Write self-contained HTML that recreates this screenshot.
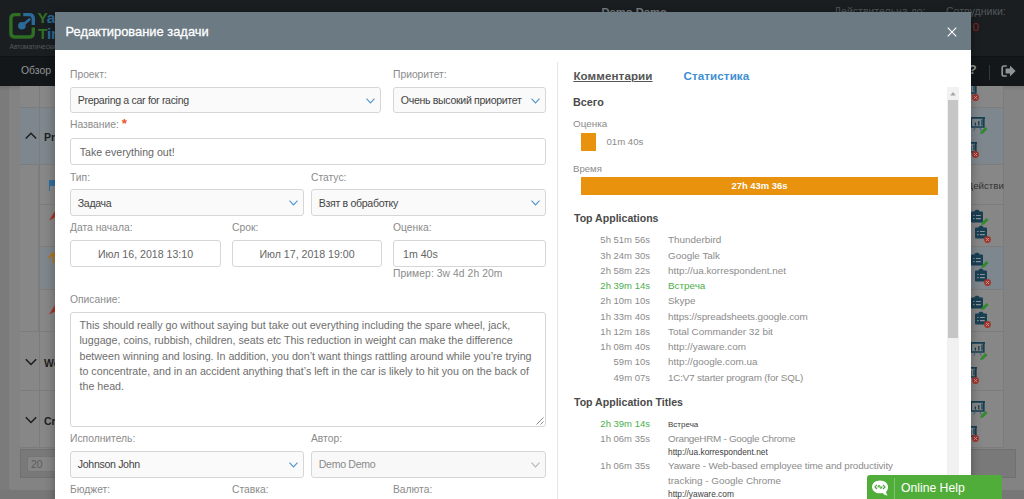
<!DOCTYPE html>
<html lang="ru">
<head>
<meta charset="utf-8">
<title>Редактирование задачи</title>
<style>
*{box-sizing:border-box;margin:0;padding:0}
html,body{width:1024px;height:499px;overflow:hidden;background:#7c7c7c;font-family:"Liberation Sans",sans-serif;}
#page,#page div,#page span,#page svg{position:absolute}
#page{left:0;top:0;width:1024px;height:499px;overflow:hidden;background:#7b7b7b}
.t{white-space:nowrap;line-height:14px}
/* ---------- dimmed background page ---------- */
#topbar{left:0;top:0;width:1024px;height:56px;background:#1a1e21}
#navbar{left:0;top:55.5px;width:1024px;height:30px;background:#13171a;border-top:1px solid #0f1215}
#navbar .ob{left:21px;top:7.8px;font-size:10.4px;color:#939596}
.bgc{background:#828282}
.bgb{background:#77828a}
#cont{left:9px;top:85px;width:1020px;height:405px;background:#838383;border-radius:0 0 0 4px}
#foot{left:0;top:490px;width:1024px;height:9px;background:#777}
.cell{background:#878787;border-right:1px solid #7c7c7c;border-bottom:1px solid #7c7c7c}
.bl{background:#7e878d}
.vl{width:1px;background:#7c7c7c}
.gb{font-size:10.5px;font-weight:bold;color:#1e1e1e}
.pg{background:#797979;border:1px solid #707070}
.pgi{background:#868686;border:1px solid #767676;border-radius:2px}
.lg{font-size:15.5px;font-weight:bold;letter-spacing:-.2px}
/* ---------- modal ---------- */
#modal{left:55px;top:12px;width:916px;height:500px;background:#fff;box-shadow:0 1px 10px rgba(0,0,0,.32)}
#mhead{left:0;top:0;width:916px;height:38px;background:#6c7a84}
#mhead .ttl{left:10.5px;top:12.6px;font-size:12.9px;color:#fff;-webkit-text-stroke:.3px #fff}
.lbl{font-size:10.3px;color:#8b8b8b;margin-top:.7px}
.inp{border:1px solid #d6d6d6;border-radius:3px;background:#fff;height:26.4px}
.inp .t{font-size:10.6px;color:#666;top:6px}
.sel{border:1px solid #d6d6d6;border-radius:3px;background:#fafafa;height:26.4px}
.sel .t{left:6.8px;top:5.5px;font-size:10.6px;letter-spacing:-.33px;color:#444}
.sel svg{right:5px;top:10px;width:9px;height:6px}
.dis{background:#f8f8f8}
.dis .t{color:#8a8a8a}
.tx{font-size:10.68px;color:#6e6e6e;white-space:nowrap;line-height:15.25px}
.tab{font-size:11.6px;font-weight:bold;letter-spacing:.1px}
.hb{font-size:10.8px;font-weight:bold;color:#4a4a4a}
.ha{font-size:10.57px;font-weight:bold;color:#4a4a4a;margin-top:.7px}
.rl{font-size:9.9px;color:#8b8b8b}
.tm{left:496px;width:99px;text-align:right;font-size:9.5px;color:#8b8b8b}
.nm{left:613px;font-size:9.9px;color:#8b8b8b}
.sm{left:613px;font-size:8.35px;color:#3d3d3d}
.g{color:#4cae4c}
#oh{left:867px;top:475px;width:135px;height:30px;background:#51ad3a;border-radius:3px 3px 0 0}
#vdiv{left:502px;top:50px;width:1px;height:450px;background:#e6e6e6}
</style>
</head>
<body>
<div id="page">
  <svg style="width:0;height:0;left:0;top:0" viewBox="0 0 1 1"><defs>
    <g id="i-board"><path d="M0 .9 H15 M1.2 .9 V10 H13.8 V.9" fill="none" stroke="#173f52" stroke-width="1.7"/><path d="M5.2 10.5 L3.8 13.6 M9.8 10.5 L11.2 13.6" fill="none" stroke="#3f5f6e" stroke-width="1"/><path d="M5.4 8.6 V5.6 M8.8 8.6 V4.1 M12 8.6 V2.6" stroke="#173f52" stroke-width="1.3" fill="none"/></g>
    <g id="i-clip"><path d="M1 2.5 H3.5 C3.5 .3 8.5 .3 8.5 2.5 H11 Q12 2.5 12 3.5 V12.5 Q12 13.5 11 13.5 H1 Q0 13.5 0 12.5 V3.5 Q0 2.5 1 2.500Z" fill="#193f52"/><path d="M2.2 6.5 H3.6 M5 6.5 H9.8 M2.2 9.7 H3.6 M5 9.7 H9.8" stroke="#8b9499" stroke-width="1.2" fill="none"/></g>
    <g id="i-pen"><path d="M0 7 L1 4.5 L5.5 0 L7.5 2 L3 6.500Z" fill="#2f8a2c"/></g>
    <g id="i-x"><circle cx="3.5" cy="3.5" r="3.4" fill="#a3352d"/><path d="M2.1 2.1 L4.9 4.9 M4.9 2.1 L2.1 4.9" stroke="#b9a09d" stroke-width="1" fill="none"/></g>
    <g id="i-up"><path d="M.8 6.5 L6 1.3 L11.2 6.5" fill="none" stroke="#1c1c1c" stroke-width="1.5"/></g>
    <g id="i-dn"><path d="M.8 1.3 L6 6.5 L11.2 1.3" fill="none" stroke="#1c1c1c" stroke-width="1.5"/></g>
  </defs></svg>
  
  <!-- dimmed page behind the dialog -->
  <div id="cont"></div>
  <div id="foot"></div>
  <div style="left:0;top:85px;width:1024px;height:6px;background:linear-gradient(rgba(0,0,0,.12),rgba(0,0,0,0))"></div>
  <!-- left strip of table -->
  <div class="cell" style="left:20px;top:85px;width:40px;height:23px"></div>
  <div class="cell bl" style="left:20px;top:108px;width:40px;height:57px"></div>
  <div class="cell" style="left:20px;top:165px;width:19px;height:167px"></div>
  <div class="cell" style="left:39px;top:165px;width:21px;height:40px"></div>
  <div class="cell" style="left:39px;top:205px;width:21px;height:42px"></div>
  <div class="cell bl" style="left:39px;top:247px;width:21px;height:43px"></div>
  <div class="cell" style="left:39px;top:290px;width:21px;height:42px"></div>
  <div class="cell" style="left:20px;top:332px;width:40px;height:59px"></div>
  <div class="cell" style="left:20px;top:391px;width:40px;height:57px"></div>
  <div class="vl" style="left:39px;top:85px;height:363px"></div>
  <svg style="left:24.5px;top:132px;width:12px;height:8px" viewBox="0 0 12 8"><use href="#i-up"/></svg>
  <svg style="left:24.5px;top:358px;width:12px;height:8px" viewBox="0 0 12 8"><use href="#i-dn"/></svg>
  <svg style="left:24.5px;top:416px;width:12px;height:8px" viewBox="0 0 12 8"><use href="#i-dn"/></svg>
  <span class="t gb" style="left:44px;top:130px">Pr</span>
  <span class="t gb" style="left:44px;top:356px">Wo</span>
  <span class="t gb" style="left:44px;top:414px">Cr</span>
  <div style="left:49px;top:180px;width:8px;height:6px;background:#2e6f9c"></div><div style="left:49px;top:180px;width:1px;height:11px;background:#2e6f9c"></div>
  <svg style="left:48.5px;top:208.5px;width:9px;height:12px" viewBox="0 0 9 12"><path d="M0 11.5 L7 .5 L9 .5 L9 7 Z" fill="#a5332b"/></svg>
  <svg style="left:47.5px;top:251.5px;width:10px;height:11px" viewBox="0 0 10 11"><path d="M.5 6 L5.5 1 L10 5.5 M5.5 1.5 V11" fill="none" stroke="#b3741d" stroke-width="1.8"/></svg>
  <svg style="left:48.5px;top:302.5px;width:9px;height:12px" viewBox="0 0 9 12"><path d="M0 11.5 L7 .5 L9 .5 L9 7 Z" fill="#a5332b"/></svg>
  <div class="pg" style="left:20px;top:449px;width:40px;height:29px"></div>
  <div class="pgi" style="left:27px;top:456px;width:30px;height:16px"><span class="t" style="left:3px;top:.5px;font-size:10.4px;color:#5c5c5c">20</span></div>
  <!-- right strip of table -->
  <div class="cell" style="left:960px;top:85px;width:44px;height:23px"></div>
  <div class="cell bl" style="left:960px;top:108px;width:44px;height:57px"></div>
  <div class="cell" style="left:960px;top:165px;width:44px;height:40px"></div>
  <div class="cell" style="left:960px;top:205px;width:44px;height:42px"></div>
  <div class="cell bl" style="left:960px;top:247px;width:44px;height:43px"></div>
  <div class="cell" style="left:960px;top:290px;width:44px;height:42px"></div>
  <div class="cell" style="left:960px;top:332px;width:44px;height:59px"></div>
  <div class="cell" style="left:960px;top:391px;width:44px;height:57px"></div>
  <div class="pg" style="left:960px;top:449px;width:56px;height:29px"></div>
  <span class="t gb" style="left:966.6px;top:178.5px;font-size:9.7px;color:#333;font-weight:normal">Действи</span>
  <svg style="left:962px;top:82.5px;width:15px;height:14px" viewBox="0 0 15 14"><use href="#i-board"/></svg><svg style="left:972.2px;top:93.5px;width:7px;height:7px" viewBox="0 0 7 7"><use href="#i-x"/></svg>
  <svg style="left:969.5px;top:117.2px;width:15px;height:14px" viewBox="0 0 15 14"><use href="#i-board"/></svg><svg style="left:979.5px;top:127.4px;width:8px;height:7px" viewBox="0 0 8 7"><use href="#i-pen"/></svg>
  <svg style="left:962px;top:142.4px;width:15px;height:14px" viewBox="0 0 15 14"><use href="#i-board"/></svg><svg style="left:972.2px;top:150.7px;width:7px;height:7px" viewBox="0 0 7 7"><use href="#i-x"/></svg>
  <svg style="left:969.5px;top:342.4px;width:15px;height:14px" viewBox="0 0 15 14"><use href="#i-board"/></svg><svg style="left:979.5px;top:352.6px;width:8px;height:7px" viewBox="0 0 8 7"><use href="#i-pen"/></svg>
  <svg style="left:962px;top:367.0px;width:15px;height:14px" viewBox="0 0 15 14"><use href="#i-board"/></svg><svg style="left:972.2px;top:376.5px;width:7px;height:7px" viewBox="0 0 7 7"><use href="#i-x"/></svg>
  <svg style="left:969.5px;top:401.2px;width:15px;height:14px" viewBox="0 0 15 14"><use href="#i-board"/></svg><svg style="left:979.5px;top:411.4px;width:8px;height:7px" viewBox="0 0 8 7"><use href="#i-pen"/></svg>
  <svg style="left:962px;top:425.6px;width:15px;height:14px" viewBox="0 0 15 14"><use href="#i-board"/></svg><svg style="left:972.2px;top:434.5px;width:7px;height:7px" viewBox="0 0 7 7"><use href="#i-x"/></svg>
  <svg style="left:970.5px;top:209.4px;width:12px;height:14px" viewBox="0 0 12 14"><use href="#i-clip"/></svg><svg style="left:980.5px;top:217.9px;width:8px;height:7px" viewBox="0 0 8 7"><use href="#i-pen"/></svg><svg style="left:975px;top:225.4px;width:12px;height:14px" viewBox="0 0 12 14"><use href="#i-clip"/></svg><svg style="left:984px;top:235.9px;width:7px;height:7px" viewBox="0 0 7 7"><use href="#i-x"/></svg>
  <svg style="left:970.5px;top:252.0px;width:12px;height:14px" viewBox="0 0 12 14"><use href="#i-clip"/></svg><svg style="left:980.5px;top:260.5px;width:8px;height:7px" viewBox="0 0 8 7"><use href="#i-pen"/></svg><svg style="left:975px;top:268.0px;width:12px;height:14px" viewBox="0 0 12 14"><use href="#i-clip"/></svg><svg style="left:984px;top:278.5px;width:7px;height:7px" viewBox="0 0 7 7"><use href="#i-x"/></svg>
  <svg style="left:970.5px;top:294.6px;width:12px;height:14px" viewBox="0 0 12 14"><use href="#i-clip"/></svg><svg style="left:980.5px;top:303.1px;width:8px;height:7px" viewBox="0 0 8 7"><use href="#i-pen"/></svg><svg style="left:975px;top:310.6px;width:12px;height:14px" viewBox="0 0 12 14"><use href="#i-clip"/></svg><svg style="left:984px;top:321.1px;width:7px;height:7px" viewBox="0 0 7 7"><use href="#i-x"/></svg>
  <div id="topbar"></div>
  <!-- top bar content -->
  <svg style="left:7px;top:11px;width:30px;height:30px" viewBox="7 11 30 30"><path d="M20.5 14.6 H15 Q10.9 14.6 10.9 18.7 V32.9 Q10.9 37 15 37 H29.2 Q33.3 37 33.3 32.9 V27.5" fill="none" stroke="#2f6e25" stroke-width="3.4"/><path d="M23.2 14.6 H29.2 Q33.3 14.6 33.3 18.7 V25" fill="none" stroke="#2b6b98" stroke-width="3.4"/><circle cx="21.9" cy="25.8" r="3.8" fill="#2b6b98"/><path d="M21.9 25.8 L29.4 19.4" stroke="#2b6b98" stroke-width="2.6" stroke-linecap="round"/></svg>
  <span class="t lg" style="left:37.5px;top:11px"><span style="position:static;color:#2f6e25">Y</span><span style="position:static;color:#2b6b98">aWare</span></span>
  <span class="t lg" style="left:38px;top:26.8px"><span style="position:static;color:#2f6e25">T</span><span style="position:static;color:#2b6b98">imeTracker</span></span>
  <span class="t" style="left:9.5px;top:40.2px;font-size:6.6px;color:#55595b">Автоматический учет рабочего времени</span>
  <span class="t" style="left:601.5px;top:4.5px;font-size:11.2px;font-weight:bold;color:#7c8082">Demo Demo</span>
  <span class="t" style="left:834px;top:4px;font-size:10.5px;color:#54585a">Действительна до:</span>
  <span class="t" style="left:946px;top:4px;font-size:10.5px;color:#54585a">Сотрудники:</span>
  <span class="t" style="left:972.5px;top:20px;font-size:11.5px;color:#8c2a1c">0</span>
  <div id="navbar"><span class="t ob">Обзор</span><div style="left:989px;top:8px;width:1px;height:15px;background:#33383b"></div><svg style="left:1001px;top:8.2px;width:15px;height:12px" viewBox="0 0 15 12"><path d="M5.8 1 H3 Q1.2 1 1.2 2.8 V9.2 Q1.2 11 3 11 H5.8" fill="none" stroke="#8e9599" stroke-width="1.7"/><path d="M4.6 3.4 H9 V.4 L14.6 6 L9 11.6 V8.6 H4.6Z" fill="#8e9599"/></svg><span class="t" style="left:968.5px;top:6.8px;font-size:13.5px;font-weight:bold;color:#8e9599">?</span></div>

  <div id="modal">
    <div id="mhead"><span class="t ttl">Редактирование задачи</span></div>

    <!-- left form -->
    <span class="t lbl" style="left:15px;top:55px">Проект:</span>
    <span class="t lbl" style="left:338px;top:55px">Приоритет:</span>
    <div class="sel" style="left:15px;top:74.6px;width:311px"><span class="t">Preparing a car for racing</span><svg viewBox="0 0 9 6"><path d="M.5 .7 L4.5 4.9 L8.5 .7" fill="none" stroke="#4f94cd" stroke-width="1.1"/></svg></div>
    <div class="sel" style="left:338px;top:74.6px;width:153px"><span class="t">Очень высокий приоритет</span><svg viewBox="0 0 9 6"><path d="M.5 .7 L4.5 4.9 L8.5 .7" fill="none" stroke="#4f94cd" stroke-width="1.1"/></svg></div>

    <span class="t lbl" style="left:15px;top:105px">Название: <b style="color:#f0522f;font-size:13.5px;line-height:10px">*</b></span>
    <div class="inp" style="left:15px;top:126px;width:476px;height:26.6px"><span class="t" style="left:8.8px;top:5.9px">Take everything out!</span></div>

    <span class="t lbl" style="left:15px;top:158px">Тип:</span>
    <span class="t lbl" style="left:256px;top:158px">Статус:</span>
    <div class="sel" style="left:15px;top:177.2px;width:234px"><span class="t">Задача</span><svg viewBox="0 0 9 6"><path d="M.5 .7 L4.5 4.9 L8.5 .7" fill="none" stroke="#4f94cd" stroke-width="1.1"/></svg></div>
    <div class="sel" style="left:256px;top:177.2px;width:235px"><span class="t">Взят в обработку</span><svg viewBox="0 0 9 6"><path d="M.5 .7 L4.5 4.9 L8.5 .7" fill="none" stroke="#4f94cd" stroke-width="1.1"/></svg></div>

    <span class="t lbl" style="left:15px;top:208px">Дата начала:</span>
    <span class="t lbl" style="left:177px;top:208px">Срок:</span>
    <span class="t lbl" style="left:338px;top:208px">Оценка:</span>
    <div class="inp" style="left:15px;top:228.2px;width:151px"><span class="t" style="left:0;width:149px;text-align:center">Июл 16, 2018 13:10</span></div>
    <div class="inp" style="left:177px;top:228.2px;width:150px"><span class="t" style="left:0;width:148px;text-align:center">Июл 17, 2018 19:00</span></div>
    <div class="inp" style="left:338px;top:228.2px;width:153px"><span class="t" style="left:9px">1m 40s</span></div>
    <span class="t lbl" style="left:338px;top:254px;letter-spacing:.08px">Пример: 3w 4d 2h 20m</span>

    <span class="t lbl" style="left:15px;top:280px">Описание:</span>
    <div class="inp" id="ta" style="left:15px;top:300px;width:476px;height:115px">
      <span class="tx" style="left:8.5px;top:5.2px">This should really go without saying but take out everything including the spare wheel, jack,<br>luggage, coins, rubbish, children, seats etc This reduction in weight can make the difference<br>between winning and losing. In addition, you don’t want things rattling around while you’re trying<br>to concentrate, and in an accident anything that’s left in the car is likely to hit you on the back of<br>the head.</span>
      <svg style="right:1px;bottom:1px;width:8px;height:8px" viewBox="0 0 8 8"><path d="M7.5 .5 L.5 7.5 M7.5 4.5 L4.5 7.5" stroke="#8a8a8a" stroke-width="1" fill="none"/></svg>
    </div>

    <span class="t lbl" style="left:15px;top:419.6px">Исполнитель:</span>
    <span class="t lbl" style="left:256px;top:419.6px">Автор:</span>
    <div class="sel" style="left:15px;top:439.2px;width:234px;height:27px"><span class="t" style="top:4.8px">Johnson John</span><svg viewBox="0 0 9 6"><path d="M.5 .7 L4.5 4.9 L8.5 .7" fill="none" stroke="#4f94cd" stroke-width="1.1"/></svg></div>
    <div class="sel dis" style="left:256px;top:439.2px;width:235px;height:27px"><span class="t" style="top:4.8px">Demo Demo</span><svg viewBox="0 0 9 6"><path d="M.5 .7 L4.5 4.9 L8.5 .7" fill="none" stroke="#b5b5b5" stroke-width="1.1"/></svg></div>

    <span class="t lbl" style="left:15px;top:470.6px">Бюджет:</span>
    <span class="t lbl" style="left:177px;top:470.6px">Ставка:</span>
    <span class="t lbl" style="left:338px;top:470.6px">Валюта:</span>
    <div id="vdiv"></div>

    <!-- right panel -->
    <span class="t tab" style="left:518.4px;top:57px;color:#555;text-decoration:underline">Комментарии</span>
    <span class="t tab" style="left:628.5px;top:57px;color:#3f8fd2">Статистика</span>
    <span class="t hb" style="left:518px;top:83px">Всего</span>
    <span class="t rl" style="left:518px;top:105px">Оценка</span>
    <div style="left:526px;top:121px;width:15px;height:18px;background:#e8920e"></div>
    <span class="t rl" style="left:551.5px;top:123px;font-size:9.6px">01m 40s</span>
    <span class="t rl" style="left:518px;top:150px;font-size:9.6px">Время</span>
    <div style="left:526px;top:165px;width:357px;height:18px;background:#e8920e"><span class="t" style="left:0;width:357px;text-align:center;top:2px;font-size:9.4px;font-weight:bold;color:#fff">27h 43m 36s</span></div>
    <span class="t ha" style="left:519px;top:198px">Top Applications</span>
    <span class="t tm" style="top:221.4px">5h 51m 56s</span><span class="t nm" style="top:221.4px">Thunderbird</span>
    <span class="t tm" style="top:236.6px">3h 24m 30s</span><span class="t nm" style="top:236.6px">Google Talk</span>
    <span class="t tm" style="top:251.8px">2h 58m 22s</span><span class="t nm" style="top:251.8px">http://ua.korrespondent.net</span>
    <span class="t tm g" style="top:267.0px">2h 39m 14s</span><span class="t nm g" style="top:267.0px">Встреча</span>
    <span class="t tm" style="top:282.3px">2h 10m 10s</span><span class="t nm" style="top:282.3px">Skype</span>
    <span class="t tm" style="top:297.5px">1h 33m 40s</span><span class="t nm" style="top:297.5px;letter-spacing:-.1px">https://spreadsheets.google.com</span>
    <span class="t tm" style="top:312.8px">1h 12m 18s</span><span class="t nm" style="top:312.8px">Total Commander 32 bit</span>
    <span class="t tm" style="top:328.0px">1h 08m 40s</span><span class="t nm" style="top:328.0px">http://yaware.com</span>
    <span class="t tm" style="top:343.2px">59m 10s</span><span class="t nm" style="top:343.2px">http://google.com.ua</span>
    <span class="t tm" style="top:358.5px">49m 07s</span><span class="t nm" style="top:358.5px;letter-spacing:-.19px">1C:V7 starter program (for SQL)</span>
    <span class="t ha" style="left:519px;top:382.5px">Top Application Titles</span>
    <span class="t tm g" style="top:405px">2h 39m 14s</span><span class="t sm" style="top:405.5px;font-size:8px">Встреча</span>
    <span class="t tm" style="top:420px">1h 06m 35s</span><span class="t nm" style="top:420px;letter-spacing:-.27px">OrangeHRM - Google Chrome</span>
    <span class="t sm" style="top:432.5px">http://ua.korrespondent.net</span>
    <span class="t tm" style="top:446.5px">1h 06m 35s</span><span class="t nm" style="top:446.5px;letter-spacing:-.12px">Yaware - Web-based employee time and productivity</span>
    <span class="t nm" style="top:462px">tracking - Google Chrome</span>
    <span class="t sm" style="top:474.5px">http://yaware.com</span>
    <!-- scrollbar -->
    <div style="left:892px;top:75.2px;width:12.4px;height:425px;background:#f1f1f1"></div>
    <div style="left:893px;top:88px;width:10.2px;height:238px;background:#c6c6c6"></div>
    <svg style="left:895px;top:80.3px;width:6px;height:3.6px" viewBox="0 0 6 4"><path d="M0 4 L3 0 L6 4Z" fill="#a3a3a3"/></svg>
    <svg style="left:892px;top:15px;width:10px;height:10px" viewBox="0 0 10 10"><path d="M.7 .7 L9.3 9.3 M9.3 .7 L.7 9.3" stroke="#fff" stroke-width="1.1" fill="none"/></svg>
  </div>

  <div id="oh"><svg style="left:4px;top:4px;width:19px;height:18px" viewBox="0 0 19 18"><path d="M9 1.5 C4.5 1.5 1 4.3 1 7.9 C1 11.5 4.5 14.3 9 14.3 C9.9 14.3 10.8 14.2 11.6 14 C12.8 15.3 14.5 16.2 16.6 16.6 C15.7 15.5 15.2 14.3 15 13 C16.3 11.7 17 9.9 17 7.9 C17 4.3 13.5 1.5 9 1.5Z" fill="#fff"/><path d="M6 5.8 L4 7.9 L6 10 M12 5.8 L14 7.9 L12 10" stroke="#4aa83c" stroke-width="1.2" fill="none"/><path d="M7 8.6 C7 6 9 6 9 7.9 C9 9.8 11 9.8 11 7.2" stroke="#4aa83c" stroke-width="1.2" fill="none"/></svg><div style="left:27px;top:3px;width:1px;height:22px;background:#7cc56f"></div><span class="t" style="left:34px;top:5.7px;font-size:12.2px;color:#fff">Online Help</span></div>
</div>
</body>
</html>
